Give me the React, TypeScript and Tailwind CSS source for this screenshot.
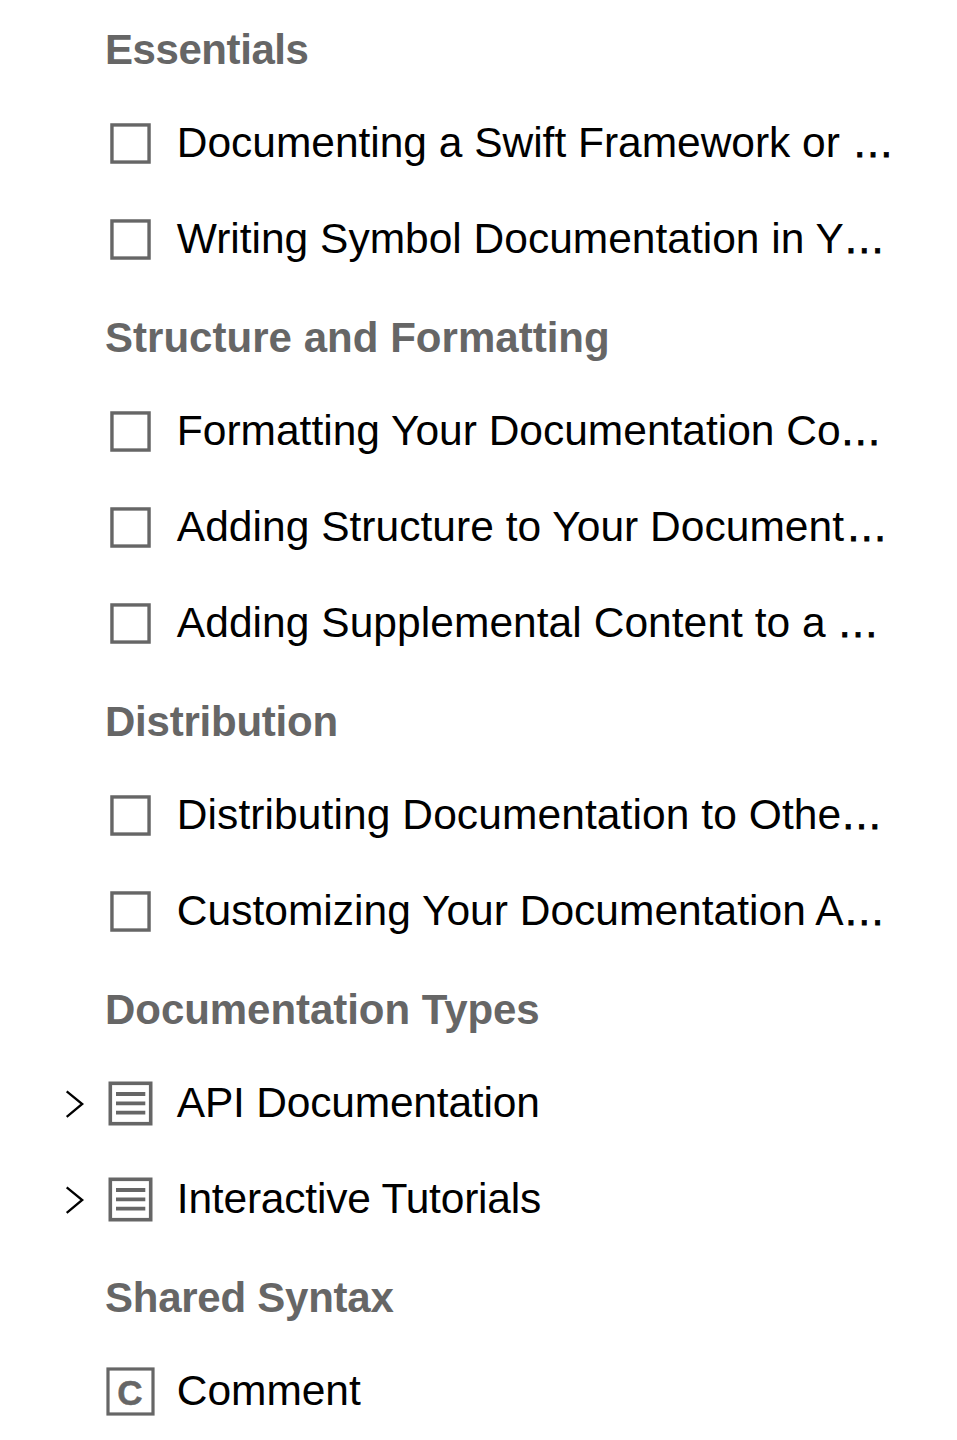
type IconKind = "article" | "list" | "class";

type Item = {
  text: string;
  spacing: string;
  icon: IconKind;
  cut?: string;
};

type Group = {
  title: string;
  spacing: string;
  items: Item[];
};

const groups: Group[] = [
  {
    title: "Essentials",
    spacing: "tracking-[-0.43px]",
    items: [
      { text: "Documenting a Swift Framework or ", spacing: "tracking-[-0.02px]", icon: "article", cut: "ml-[0.3px]" },
      { text: "Writing Symbol Documentation in Y", spacing: "tracking-normal", icon: "article", cut: "ml-[-0.4px]" },
    ],
  },
  {
    title: "Structure and Formatting",
    spacing: "tracking-[0.03px]",
    items: [
      { text: "Formatting Your Documentation Co", spacing: "tracking-normal", icon: "article", cut: "ml-[-0.9px]" },
      { text: "Adding Structure to Your Document", spacing: "tracking-[0.03px]", icon: "article", cut: "ml-[1.7px]" },
      { text: "Adding Supplemental Content to a ", spacing: "tracking-[0.05px]", icon: "article", cut: "ml-[-0.6px]" },
    ],
  },
  {
    title: "Distribution",
    spacing: "tracking-[-0.23px]",
    items: [
      { text: "Distributing Documentation to Othe", spacing: "tracking-[0.09px]", icon: "article", cut: "ml-[-0.9px]" },
      { text: "Customizing Your Documentation A", spacing: "tracking-[0.02px]", icon: "article", cut: "ml-[-0.4px]" },
    ],
  },
  {
    title: "Documentation Types",
    spacing: "tracking-[-0.05px]",
    items: [
      { text: "API Documentation", spacing: "tracking-[-0.2px]", icon: "list" },
      { text: "Interactive Tutorials", spacing: "tracking-[-0.2px]", icon: "list" },
    ],
  },
  {
    title: "Shared Syntax",
    spacing: "tracking-[-0.25px]",
    items: [{ text: "Comment", spacing: "tracking-[-0.05px]", icon: "class" }],
  },
];

function KindIcon({ kind }: { kind: IconKind }) {
  return (
    <svg width="51" height="51" viewBox="0 0 51 51" fill="none" stroke="#666" className="mt-[22px] shrink-0">
      {kind === "article" && <rect x="6.95" y="6.95" width="37.1" height="37.1" strokeWidth="3.4" />}
      {kind === "list" && (
        <>
          <rect x="5.3" y="5.3" width="40.4" height="40.4" strokeWidth="3.6" />
          <path d="M11 16H40.3M11 25.4H40.3M11 34.6H40.3" strokeWidth="3.9" />
        </>
      )}
      {kind === "class" && (
        <>
          <rect x="3" y="3" width="45" height="45" strokeWidth="3.2" />
          <text x="24.8" y="39" textAnchor="middle" fill="#666" stroke="#666" strokeWidth="0.5" fontSize="35" fontWeight="700">
            C
          </text>
        </>
      )}
    </svg>
  );
}

function Chevron() {
  return (
    <svg width="20" height="30" viewBox="0 0 20 30" fill="none" stroke="#000" strokeWidth="2.3" className="mt-[33px]">
      <path d="M1.7 2.3L17.2 15L1.7 27.8" />
    </svg>
  );
}

export default function App() {
  return (
    <nav className="h-[1440px] w-[957px] overflow-hidden bg-white font-['Liberation_Sans',Arial,sans-serif] text-[42.5px] text-black">
      {groups.map((group) => (
        <section key={group.title}>
          <h2 className={`h-24 pl-[105px] text-[42px] font-bold leading-[100px] whitespace-pre text-[#666] ${group.spacing}`}>
            {group.title}
          </h2>
          <ul>
            {group.items.map((item) => (
              <li key={item.text} className="flex h-24 items-start pl-[65px]">
                <div className="w-10 shrink-0">{item.icon === "list" && <Chevron />}</div>
                <KindIcon kind={item.icon} />
                <span className={`ml-[20.8px] leading-[93px] whitespace-pre ${item.spacing}`}>{item.text}</span>
                {item.cut && (
                  <span className={`text-[42px] leading-[94px] [-webkit-text-stroke:0.9px_#000] ${item.cut}`}>…</span>
                )}
              </li>
            ))}
          </ul>
        </section>
      ))}
    </nav>
  );
}
